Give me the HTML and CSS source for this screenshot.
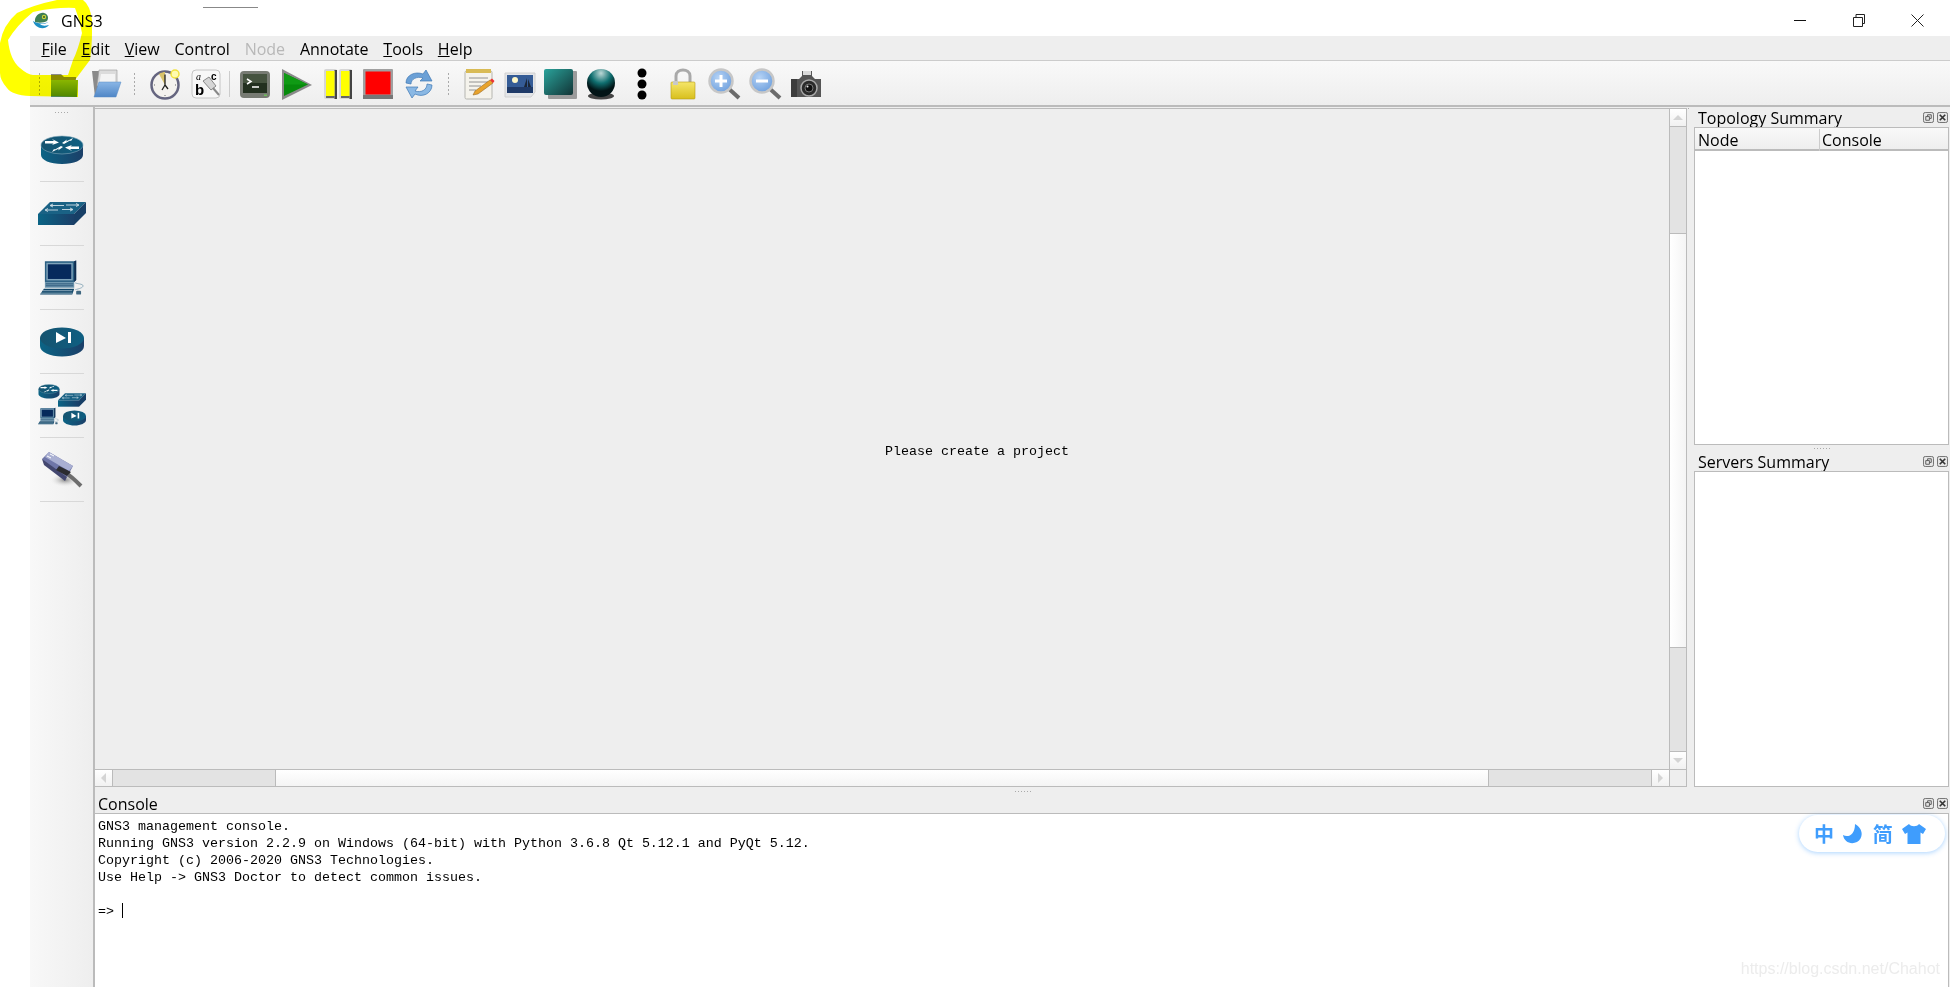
FILE: index.html
```html
<!DOCTYPE html>
<html lang="en-us">

<head>
    <meta charset="utf-8">
    <title>GNS3</title>
    <link rel="stylesheet" href="styles.css">
</head>

<body>
    <svg class="defs" width="0" height="0">
        <defs>
            <linearGradient id="cisco" x1="0" x2="1" y1="0" y2="0">
                <stop offset="0" stop-color="#0b6485" />
                <stop offset="1" stop-color="#1b3f68" />
            </linearGradient>
            <linearGradient id="ciscoTop" x1="0" x2="1" y1="0" y2="0">
                <stop offset="0" stop-color="#15536f" />
                <stop offset="1" stop-color="#0f5f82" />
            </linearGradient>
            <linearGradient id="teal" x1="0" x2="1" y1="0" y2="1">
                <stop offset="0" stop-color="#2aa39b" />
                <stop offset="1" stop-color="#123436" />
            </linearGradient>
            <linearGradient id="folderBlue" x1="0" x2="0" y1="0" y2="1">
                <stop offset="0" stop-color="#8ab6e6" />
                <stop offset="1" stop-color="#4f86c6" />
            </linearGradient>
            <linearGradient id="lockGold" x1="0" x2="0" y1="0" y2="1">
                <stop offset="0" stop-color="#f5e66a" />
                <stop offset="1" stop-color="#d8bf1c" />
            </linearGradient>
            <radialGradient id="sphere" cx="0.5" cy="0.15" r="0.8">
                <stop offset="0" stop-color="#bcd8d6" />
                <stop offset="0.45" stop-color="#0f6f70" />
                <stop offset="0.8" stop-color="#021416" />
            </radialGradient>
            <radialGradient id="lens" cx="0.4" cy="0.35" r="0.7">
                <stop offset="0" stop-color="#b6d3f5" />
                <stop offset="1" stop-color="#6d9fdd" />
            </radialGradient>
            <radialGradient id="cableShadow">
                <stop offset="0" stop-color="#888" />
                <stop offset="1" stop-color="#eee" stop-opacity="0" />
            </radialGradient>

            <symbol id="router" viewBox="0 0 44 30">
                <path d="M1,10 v10 c0,5 9,9 21,9 s21,-4 21,-9 v-10 z" fill="url(#cisco)" />
                <ellipse cx="22" cy="10" rx="21" ry="9" fill="url(#ciscoTop)" stroke="#7fa6b8" stroke-width="0.6" />
                <path d="M5,6 H14 L12,4 L19,7.500 L12,10 L13.500,8.500 H5 z M39,14 H30 L32,16 L25,12.500 L32,10 L30.500,11.500 H39 z M33,3 L26,6.500 L27,4.500 L22,8 L24,9 L30,5.500 L31,6 z M12,17 L19,13.500 L18,15.500 L23,12 L21,11 L15,14.500 L14,14 z" fill="#fff" />
            </symbol>
            <symbol id="switch" viewBox="0 0 48 23">
                <path d="M0,12 H36 V23 H0 z" fill="url(#cisco)" />
                <path d="M0,12 L12,0 H48 L36,12 z" fill="#1a6285" />
                <path d="M36,12 L48,0 V11 L36,23 z" fill="#173f66" />
                <path d="M13,3.500 H26 M28,3 H40 M8,8 H20 M24,7.500 H34" stroke="#e8f0f4" stroke-width="0.8" />
                <path d="M15,2 L12,3.500 L15,5 M38,1.500 L41,3 L38,4.500 M10,6.500 L7,8 L10,9.500 M32,6 L35,7.500 L32,9" fill="none" stroke="#e8f0f4" stroke-width="0.8" />
            </symbol>
            <symbol id="pc" viewBox="0 0 45 37">
                <path d="M5,2 H35 L37,1 V21 L35,23 H5 z" fill="#2a5f82" />
                <path d="M35,2 L37,1 V21 L35,23 z" fill="#0f2c50" />
                <rect x="6.500" y="3.500" width="27" height="18" fill="#7fa3ba" />
                <rect x="8" y="5" width="24" height="15" fill="#062a5c" />
                <path d="M5,23 H35 V29 H5 z" fill="#6f98b0" />
                <path d="M6,25 H34 M6,27 H34" stroke="#1f4a70" stroke-width="0.8" />
                <path d="M4,30 H35 L33,36 H0 z" fill="#0f4568" />
                <path d="M3,32 H33 M1,34.500 H33" stroke="#c3d6e0" stroke-width="0.7" />
                <path d="M36,31 C40,30 44,29 44,27 C44,25 38,25 36,24" fill="none" stroke="#7a9cb0" stroke-width="0.8" />
                <rect x="37" y="32" width="5" height="4" rx="1" fill="#3f6780" />
            </symbol>
            <symbol id="hub" viewBox="0 0 44 30">
                <path d="M0,11 v8 c0,6 10,10.500 22,10.500 s22,-4.500 22,-10.500 v-8 z" fill="url(#cisco)" />
                <ellipse cx="22" cy="11" rx="22" ry="10.500" fill="url(#ciscoTop)" />
                <path d="M16,5 L26,11 L16,16 z M28,5 H31 V16 H28 z" fill="#fff" />
            </symbol>
        </defs>
    </svg>

    <svg class="scribble" width="100" height="100" viewBox="0 0 100 100">
        <path d="M57,0 L83,0 Q90,5 92,20 L92,33 Q92,45 90,60 L75,80 L78,80 L78,97 L30,96 Q12,95 7,88 Q0,80 0,73 L0,43 Q3,25 17,13 Q33,5 57,0 L75,8 Q57,7 33,12 Q17,25 8,40 Q10,60 20,68 Q28,75 33,75 L68,75 L73,60 Q78,50 82,33 Q80,20 75,8 z" />
    </svg>
    <div class="stray-line"></div>

    <header class="titlebar">
        <svg class="logo" width="20" height="20" viewBox="0 0 20 20">
            <path d="M3,11 C2,5 8,1 12,2 C16,3 17,7 15,10 C12,12 6,12 3,11 z" fill="#3f7f55" />
            <circle cx="12" cy="6" r="2.200" fill="#c9d83a" />
            <circle cx="12" cy="6" r="0.900" fill="#26472f" />
            <path d="M1,10 C3,17 12,20 17,14 C13,15 10,15 8,13 C13,13 15,12 17,11 C12,13 5,13 1,10 z" fill="#1d8fc4" />
        </svg>
        <span class="app-name">GNS3</span>
        <div class="win-controls">
            <svg class="win-min" width="12" height="12" viewBox="0 0 12 12"><path d="M0,5.500 H12" stroke="#111" /></svg>
            <svg class="win-max" width="12" height="13" viewBox="0 0 12 13"><path d="M0.500,3.500 H9.500 V12.500 H0.500 z M3,3 V0.500 H11.500 V9.500 H10" fill="none" stroke="#222" /></svg>
            <svg class="win-close" width="13" height="13" viewBox="0 0 13 13"><path d="M0.500,0.500 L12.500,12.500 M12.500,0.500 L0.500,12.500" stroke="#222" /></svg>
        </div>
    </header>

    <div class="app">
        <nav class="menubar">
            <span class="menu-item"><u>F</u>ile</span>
            <span class="menu-item"><u>E</u>dit</span>
            <span class="menu-item"><u>V</u>iew</span>
            <span class="menu-item">Control</span>
            <span class="menu-item disabled">Node</span>
            <span class="menu-item">Annotate</span>
            <span class="menu-item"><u>T</u>ools</span>
            <span class="menu-item"><u>H</u>elp</span>
        </nav>

        <div class="toolbar">
            <span class="grip grip-first"></span>
            <span class="tool">
                <svg viewBox="0 0 36 36"><path d="M5,8 H15 L18,11 H30 V31 H5 z" fill="#8b8b8b" /><path d="M5,14 H32 L31,31 H5 z" fill="url(#folderBlue)" /></svg>
            </span>
            <span class="tool">
                <svg viewBox="0 0 36 36"><path d="M5,5 H12 L14,8 H28 V31 H8 z" fill="#8a8a8a" /><path d="M12,4 H30 V20 H10 z" fill="#dcdcdc" stroke="#999" stroke-width="0.600" /><path d="M14,8 H28 V20 H12 z" fill="#f4f4f4" /><path d="M12,16 H34 L29,31 H7 z" fill="url(#folderBlue)" stroke="#5a8cc4" stroke-width="0.500" /></svg>
            </span>
            <span class="grip grip-wide"></span>
            <span class="tool">
                <svg viewBox="0 0 36 36"><circle cx="18" cy="19" r="13.500" fill="#f4f2ee" stroke="#65657f" stroke-width="2.500" /><path d="M18,19 L12,8 C14,6.500 17,6 18,6 z" fill="#d9c36a" /><path d="M18,19 V9 M18,19 L21,23 M18,19 L15,24" stroke="#222" stroke-width="1.300" fill="none" /><circle cx="28" cy="8" r="4" fill="#fffbb0" stroke="#f1e23f" stroke-width="1.500" /><path d="M18,8 V9 M18,29 V30 M7,19 H8 M28,19 H29" stroke="#666" /></svg>
            </span>
            <span class="tool">
                <svg viewBox="0 0 36 36"><rect x="4" y="4" width="28" height="28" rx="4" fill="#f7f7f7" stroke="#c4c4c4" /><text x="8" y="14" class="abc-a">a</text><text x="23" y="14" class="abc-c">c</text><text x="7" y="29" class="abc-b">b</text><path d="M15,15 L21,11 L28,20 L23,24 z" fill="#d5d5d5" stroke="#888" /><path d="M25,22 L31,29" stroke="#888" stroke-width="2" /></svg>
            </span>
            <span class="tool-sep"></span>
            <span class="tool">
                <svg viewBox="0 0 36 36"><rect x="3" y="5" width="30" height="27" rx="4" fill="#777b73" /><rect x="6" y="8" width="24" height="19" fill="#22301f" /><rect x="6" y="8" width="24" height="9" fill="#45533f" /><path d="M10,13 L14,15.500 L10,18 M15,21 H22" fill="none" stroke="#fff" stroke-width="1.500" /><rect x="27" y="28.500" width="3" height="1.500" fill="#6fbf5a" /></svg>
            </span>
            <span class="tool">
                <svg viewBox="0 0 36 36"><path d="M4,3 L34,19 L4,34 z" fill="#8a8a8a" /><path d="M6,7 L30,18.500 L6,30 z" fill="#078a0c" /><path d="M6,7 L30,18.500 H6 z" fill="#0f9a14" /></svg>
            </span>
            <span class="tool">
                <svg viewBox="0 0 36 36"><rect x="5" y="3" width="13" height="30" rx="2" fill="#d6d6d6" /><rect x="15.500" y="4" width="2.500" height="29" fill="#444" /><rect x="20" y="3" width="13" height="30" rx="2" fill="#d6d6d6" /><rect x="30.500" y="4" width="2.500" height="29" fill="#444" /><rect x="7" y="5" width="8.500" height="25" fill="#ffff00" /><rect x="22" y="5" width="8.500" height="25" fill="#ffff00" /><rect x="7" y="30" width="8.500" height="2" fill="#666" /><rect x="22" y="30" width="8.500" height="2" fill="#666" /></svg>
            </span>
            <span class="tool">
                <svg viewBox="0 0 36 36"><rect x="3" y="3" width="30" height="30" rx="1" fill="#a0a0a0" /><rect x="3" y="29" width="30" height="4" fill="#777" /><rect x="5.500" y="5.500" width="25" height="23" fill="#ff0000" /></svg>
            </span>
            <span class="tool">
                <svg viewBox="0 0 36 36"><path d="M5,17 C5,9 14,5 22,8 L25,4 L31,15 H19 L22,12 C16,10 10,13 10,18 z" fill="#6ba0d6" stroke="#3f78b5" stroke-width="0.700" /><path d="M31,19 C31,27 22,32 14,28 L11,32 L5,21 H17 L14,25 C20,27 26,24 26,18 z" fill="#8ab8e4" stroke="#3f78b5" stroke-width="0.700" /></svg>
            </span>
            <span class="grip grip-wide"></span>
            <span class="tool">
                <svg viewBox="0 0 36 36"><rect x="4" y="5" width="27" height="28" rx="1.500" fill="#f5f3ec" stroke="#b5b5b0" /><rect x="5" y="3" width="25" height="4" fill="#d9bb55" /><path d="M8,12 H27 M8,16 H27 M8,20 H20 M8,24 H15" stroke="#888" stroke-width="0.900" /><path d="M12,29 L14,25 L29,14 L32,17 L17,28 z" fill="#e8a32c" stroke="#8a5a14" stroke-width="0.500" /><path d="M29,14 L32,17 L33.500,15 L31,12.500 z" fill="#e33" /></svg>
            </span>
            <span class="tool">
                <svg viewBox="0 0 36 36"><path d="M3,7 H33 V26 L29,31 H3 z" fill="#e3e5e8" stroke="#d0d0d0" /><rect x="5" y="9" width="26" height="18" fill="#355c96" /><rect x="5" y="21" width="26" height="6" fill="#1f3a68" /><circle cx="13" cy="14" r="3" fill="#fff8c8" /><path d="M22,21 L25,12 L25,21 z M26,21 V13 L29,21 z" fill="#1b2738" /></svg>
            </span>
            <span class="tool tool-narrow">
                <svg viewBox="0 0 36 36"><rect x="6" y="5" width="29" height="28" rx="1" fill="#9b9b9b" /><rect x="2" y="3" width="29" height="26" rx="2" fill="url(#teal)" /></svg>
            </span>
            <span class="tool">
                <svg viewBox="0 0 36 36"><ellipse cx="18" cy="30" rx="13" ry="3.500" fill="#444" /><circle cx="18" cy="17" r="14" fill="url(#sphere)" /></svg>
            </span>
            <span class="tool">
                <svg viewBox="0 0 36 36"><circle cx="18" cy="7" r="4.500" /><circle cx="18" cy="18" r="4.500" /><circle cx="18" cy="29" r="4.500" /></svg>
            </span>
            <span class="tool">
                <svg viewBox="0 0 36 36"><path d="M11,18 V10 C11,2 25,2 25,10 V18" fill="none" stroke="#a9a9a9" stroke-width="3" /><rect x="6" y="16" width="24" height="17" rx="1" fill="url(#lockGold)" stroke="#b79c14" stroke-width="0.600" /><rect x="8" y="15" width="5" height="4" fill="#c9c9c9" /></svg>
            </span>
            <span class="tool">
                <svg viewBox="0 0 36 36"><path d="M22,22 L33,32" stroke="#6b6b6b" stroke-width="4" /><circle cx="15" cy="15" r="11.500" fill="url(#lens)" stroke="#c7c7c7" stroke-width="2.500" /><path d="M15,9 V21 M9,15 H21" stroke="#fff" stroke-width="3" /></svg>
            </span>
            <span class="tool">
                <svg viewBox="0 0 36 36"><path d="M22,22 L33,32" stroke="#6b6b6b" stroke-width="4" /><circle cx="15" cy="15" r="11.500" fill="url(#lens)" stroke="#c7c7c7" stroke-width="2.500" /><path d="M9,15 H21" stroke="#fff" stroke-width="3" /></svg>
            </span>
            <span class="tool">
                <svg viewBox="0 0 36 36"><path d="M3,13 H11 L14,10 V5 H24 V10 L27,13 H33 V31 H3 z" fill="#555" /><rect x="15" y="5" width="8" height="4" fill="#d9d9d9" /><rect x="3" y="13" width="6" height="18" fill="#3d3d3d" /><circle cx="21" cy="22" r="8" fill="#2b2b2b" stroke="#aaa" stroke-width="1.500" /><circle cx="21" cy="22" r="4" fill="#111" stroke="#777" /><circle cx="19.500" cy="20.500" r="1" fill="#eee" /></svg>
            </span>
        </div>

        <div class="workspace">
            <aside class="sidebar">
                <div class="sidebar-grip"></div>
                <div class="device"><svg class="ico-router"><use href="#router" /></svg></div>
                <div class="device"><svg class="ico-switch"><use href="#switch" /></svg></div>
                <div class="device"><svg class="ico-pc"><use href="#pc" /></svg></div>
                <div class="device"><svg class="ico-hub"><use href="#hub" /></svg></div>
                <div class="device">
                    <svg class="ico-all" viewBox="0 0 48 44">
                        <use href="#router" x="0" y="0" width="22" height="15" />
                        <use href="#switch" x="20" y="9" width="28" height="14" />
                        <use href="#pc" x="0" y="22" width="21" height="20" />
                        <use href="#hub" x="25" y="26" width="23" height="16" />
                    </svg>
                </div>
                <div class="device">
                    <svg class="ico-cable" viewBox="0 0 42 40">
                        <ellipse cx="24" cy="30" rx="15" ry="7" fill="url(#cableShadow)" />
                        <path d="M26,24 C30,26 34,30 40,36" fill="none" stroke="#6d6d6d" stroke-width="4" />
                        <path d="M1,9 L8,2 L32,16 L26,27 L6,15 z" fill="#6f76a8" />
                        <path d="M8,2 L32,16 L28,21 L4,7 z" fill="#a9afd2" />
                        <path d="M1,9 L3,15 L24,31 L26,27 z" fill="#43476f" />
                        <path d="M18,16 L30,22 L26,26 L15,20 z" fill="#2c2c30" />
                        <path d="M6,6 L10,8 M9,4 L13,6" stroke="#fff" stroke-width="1" />
                    </svg>
                </div>
            </aside>

            <div class="main">
                <div class="upper">
                    <section class="graphics-view">
                        <div class="canvas">Please create a project</div>
                        <div class="vscroll">
                            <span class="scroll-btn"><i class="arrow-up"></i></span>
                            <span class="groove groove-top"></span>
                            <span class="thumb"></span>
                            <span class="groove groove-bottom"></span>
                            <span class="scroll-btn"><i class="arrow-down"></i></span>
                        </div>
                        <div class="hscroll">
                            <span class="scroll-btn"><i class="arrow-left"></i></span>
                            <span class="groove groove-side"></span>
                            <span class="thumb"></span>
                            <span class="groove groove-side"></span>
                            <span class="scroll-btn"><i class="arrow-right"></i></span>
                        </div>
                        <div class="corner"></div>
                    </section>

                    <div class="v-splitter"></div>

                    <div class="right-docks">
                        <div class="dock-title">
                            <span>Topology Summary</span>
                            <span class="dock-btns">
                                <svg viewBox="0 0 12 12"><rect x="0.500" y="0.500" width="11" height="11" rx="2" fill="#e6e6e6" stroke="#666" /><path d="M3,5 H7 V9 H3 z M5,5 V3 H9 V7 H7" fill="none" stroke="#555" /></svg>
                                <svg viewBox="0 0 12 12"><rect x="0.500" y="0.500" width="11" height="11" rx="2" fill="#e6e6e6" stroke="#666" /><path d="M3,3 L9,9 M9,3 L3,9" stroke="#333" stroke-width="1.800" /></svg>
                            </span>
                        </div>
                        <div class="dock-frame topology">
                            <div class="table-head">
                                <span class="col-node">Node</span>
                                <span class="col-console">Console</span>
                            </div>
                        </div>
                        <div class="h-splitter"><span class="dots"></span></div>
                        <div class="dock-title">
                            <span>Servers Summary</span>
                            <span class="dock-btns">
                                <svg viewBox="0 0 12 12"><rect x="0.500" y="0.500" width="11" height="11" rx="2" fill="#e6e6e6" stroke="#666" /><path d="M3,5 H7 V9 H3 z M5,5 V3 H9 V7 H7" fill="none" stroke="#555" /></svg>
                                <svg viewBox="0 0 12 12"><rect x="0.500" y="0.500" width="11" height="11" rx="2" fill="#e6e6e6" stroke="#666" /><path d="M3,3 L9,9 M9,3 L3,9" stroke="#333" stroke-width="1.800" /></svg>
                            </span>
                        </div>
                        <div class="dock-frame servers"></div>
                    </div>
                </div>

                <div class="h-splitter console-splitter"><span class="dots"></span></div>

                <div class="dock-title console-title">
                    <span>Console</span>
                    <span class="dock-btns">
                        <svg viewBox="0 0 12 12"><rect x="0.500" y="0.500" width="11" height="11" rx="2" fill="#e6e6e6" stroke="#666" /><path d="M3,5 H7 V9 H3 z M5,5 V3 H9 V7 H7" fill="none" stroke="#555" /></svg>
                        <svg viewBox="0 0 12 12"><rect x="0.500" y="0.500" width="11" height="11" rx="2" fill="#e6e6e6" stroke="#666" /><path d="M3,3 L9,9 M9,3 L3,9" stroke="#333" stroke-width="1.800" /></svg>
                    </span>
                </div>

                <section class="console">
                    <div class="console-line">GNS3 management console.</div>
                    <div class="console-line">Running GNS3 version 2.2.9 on Windows (64-bit) with Python 3.6.8 Qt 5.12.1 and PyQt 5.12.</div>
                    <div class="console-line">Copyright (c) 2006-2020 GNS3 Technologies.</div>
                    <div class="console-line">Use Help -&gt; GNS3 Doctor to detect common issues.</div>
                    <div class="console-line">&nbsp;</div>
                    <div class="console-line">=&gt; <span class="caret"></span></div>

                    <div class="ime-pill">
                        <span>中</span>
                        <svg width="20" height="20" viewBox="0 0 20 20"><path d="M12,0 C20,4 21,14 14,18 C8,21 1,18 0,11 C5,14 12,11 12,0 z" fill="#3f9dfd" /></svg>
                        <span>简</span>
                        <svg width="24" height="20" viewBox="0 0 24 20"><path d="M7,0 C9,3 15,3 17,0 L24,5 L21,10 L18.500,8.500 V20 H5.500 V8.500 L3,10 L0,5 z" fill="#3f9dfd" /></svg>
                    </div>
                    <div class="watermark">https://blog.csdn.net/Chahot</div>
                </section>
            </div>
        </div>
    </div>
</body>

</html>
```

FILE: styles.css
```css
* {
    margin: 0;
    padding: 0;
    box-sizing: border-box;
}

body {
    width: 1950px;
    height: 987px;
    overflow: hidden;
    position: relative;
    background-color: #fff;
    color: #000;
    font-family: "Open Sans", "Liberation Sans", sans-serif;
    font-size: 16px;
}

.defs {
    position: absolute;
}

/* highlighter scribble drawn over the screenshot */
.scribble {
    position: absolute;
    top: 0;
    left: 0;
    z-index: 5;
    fill: #ffff00;
    mix-blend-mode: multiply;
}

.stray-line {
    position: absolute;
    top: 7px;
    left: 203px;
    width: 55px;
    height: 1px;
    background-color: #888;
}

.titlebar {
    height: 36px;
    display: flex;
    align-items: center;
    padding: 5px 26px 0 32px;
}

.logo {
    margin-right: 9px;
}

.win-controls {
    margin-left: auto;
    display: flex;
    align-items: center;
}

.win-min {
    margin-right: 47px;
}

.win-max {
    margin-right: 46px;
}

.app {
    margin-left: 30px;
    height: 951px;
    display: flex;
    flex-direction: column;
    background-color: #eee;
}

.menubar {
    height: 25px;
    display: flex;
    align-items: center;
    padding: 1px 0 0 4px;
    border-bottom: 1px solid #ccc;
}

.menu-item {
    padding: 0 7.4px;
}

.menu-item.disabled {
    color: #b8b8b8;
}

.toolbar {
    height: 46px;
    display: flex;
    align-items: center;
    padding: 1px 0 0 5px;
    background: linear-gradient(#f9f9f9, #eee);
    border-bottom: 2px solid #bbb;
}

.tool {
    width: 41px;
    height: 36px;
    display: flex;
    justify-content: center;
}

.tool-narrow {
    width: 40px;
    padding-right: 1px;
}

.tool svg {
    width: 36px;
    height: 36px;
}

.grip {
    width: 18px;
    height: 24px;
    background-image: radial-gradient(circle, #aaa 0.7px, transparent 0.8px);
    background-size: 3px 4px;
    background-position: 8px 0;
    background-repeat: repeat-y;
}

.grip-wide {
    width: 19px;
}

.grip-first {
    width: 8px;
    background-position: 3px 0;
}

.tool-sep {
    width: 8px;
    height: 26px;
    background: linear-gradient(#ccc, #ccc) no-repeat 3px 0 / 1px 100%;
}

.workspace {
    flex: 1;
    min-height: 0;
    display: flex;
}

.sidebar {
    width: 65px;
    background: linear-gradient(to right, #f8f8f8, #eee);
    border-right: 2px solid #bbb;
}

.sidebar-grip {
    height: 11px;
    margin: 0 23px 0 24px;
    background-image: radial-gradient(circle, #aaa 0.7px, transparent 0.8px);
    background-size: 3px 3px;
    background-position: 0 4px;
    background-repeat: repeat-x;
}

.device {
    height: 64px;
    margin: 0 9px 0 10px;
    display: flex;
    align-items: center;
    justify-content: center;
    border-bottom: 1px solid #d8d8d8;
}

.ico-router {
    width: 44px;
    height: 30px;
}

.ico-switch {
    width: 48px;
    height: 23px;
    flex: none;
}

.ico-pc {
    width: 45px;
    height: 37px;
}

.ico-hub {
    width: 44px;
    height: 30px;
}

.ico-all {
    width: 48px;
    height: 44px;
    flex: none;
}

.ico-cable {
    width: 42px;
    height: 40px;
}

.abc-a {
    font: italic 10px "Liberation Serif", serif;
}

.abc-c {
    font: bold 10px "Liberation Sans", sans-serif;
}

.abc-b {
    font: bold 15px "Liberation Sans", sans-serif;
}

.main {
    flex: 1;
    min-width: 0;
    display: flex;
    flex-direction: column;
}

.upper {
    height: 680px;
    display: flex;
}

.graphics-view {
    width: 1592px;
    margin-top: 1px;
    display: grid;
    grid-template-columns: 1fr 17px;
    grid-template-rows: 1fr 17px;
    border-top: 1px solid #bbb;
    border-right: 1px solid #bbb;
    border-bottom: 1px solid #bbb;
}

.canvas {
    padding: 334px 0 0 790px;
    font-family: "Liberation Mono", monospace;
    font-size: 13.33px;
    line-height: 17px;
}

.vscroll,
.hscroll {
    display: flex;
}

.vscroll {
    flex-direction: column;
    border-left: 1px solid #bbb;
}

.hscroll {
    border-top: 1px solid #bbb;
}

.corner {
    border-top: 1px solid #bbb;
    border-left: 1px solid #bbb;
}

.scroll-btn {
    flex: none;
    display: flex;
    align-items: center;
    justify-content: center;
    background: linear-gradient(#fff, #f1f1f1);
}

.vscroll .scroll-btn {
    height: 17px;
}

.hscroll .scroll-btn {
    width: 17px;
}

.arrow-up,
.arrow-down,
.arrow-left,
.arrow-right {
    width: 0;
    height: 0;
    border: 5px solid transparent;
}

.arrow-up {
    border-top: 0;
    border-bottom-color: #d4d4d4;
}

.arrow-down {
    border-bottom: 0;
    border-top-color: #d4d4d4;
}

.arrow-left {
    border-left: 0;
    border-right-color: #d4d4d4;
}

.arrow-right {
    border-right: 0;
    border-left-color: #d4d4d4;
}

.groove {
    flex: none;
    background-color: #e3e3e3;
    border: 0 solid #bbb;
}

.vscroll .groove {
    border-width: 1px 0;
}

.hscroll .groove {
    border-width: 0 1px;
}

.groove-top {
    height: 108px;
}

.groove-bottom {
    height: 105px;
}

.groove-side {
    width: 164px;
}

.thumb {
    flex: 1;
}

.vscroll .thumb {
    background: linear-gradient(to right, #fff, #f4f4f4);
}

.hscroll .thumb {
    background: linear-gradient(#fff, #f4f4f4);
}

.v-splitter {
    width: 7px;
    background-image: radial-gradient(circle, #aaa 0.6px, transparent 0.7px);
    background-size: 3px 3px;
    background-repeat: no-repeat;
}

.right-docks {
    flex: 1;
    min-width: 0;
    display: flex;
    flex-direction: column;
    padding-right: 1px;
}

.dock-title {
    height: 20px;
    flex: none;
    display: flex;
    align-items: center;
    padding: 1px 1px 0 4px;
}

.dock-btns {
    margin-left: auto;
    margin-top: -1px;
    display: flex;
    gap: 3px;
}

.dock-btns svg {
    width: 11px;
    height: 11px;
}

.dock-frame {
    background-color: #fff;
    border: 1px solid #bbb;
}

.topology {
    height: 318px;
}

.servers {
    flex: 1;
}

.table-head {
    height: 23px;
    display: flex;
    align-items: center;
    padding-top: 2px;
    background: linear-gradient(#f9f9f9, #eee);
    border-bottom: 2px solid #bbb;
}

.col-node {
    width: 125px;
    padding-left: 3px;
    border-right: 1px solid #ccc;
}

.col-console {
    padding-left: 2px;
}

.h-splitter {
    height: 6px;
    flex: none;
    display: flex;
    align-items: center;
    justify-content: center;
}

.h-splitter .dots {
    width: 17px;
    height: 1px;
    background-image: radial-gradient(circle, #aaa 0.6px, transparent 0.7px);
    background-size: 3px 1px;
}

.console-splitter {
    height: 8px;
}

.console-title {
    height: 18px;
    padding: 0 2px 1px 3px;
}

.console {
    flex: 1;
    min-height: 0;
    position: relative;
    background-color: #fff;
    margin-right: 1px;
    padding: 4px 0 0 3px;
    border: 1px solid #bbb;
    border-left: 0;
    border-bottom: 0;
    font-family: "Liberation Mono", monospace;
    font-size: 13.33px;
    line-height: 17px;
}

.console-line {
    white-space: pre;
}

.caret {
    display: inline-block;
    width: 1px;
    height: 15px;
    vertical-align: -3px;
    background-color: #000;
}

.ime-pill {
    position: absolute;
    top: 1px;
    right: 3px;
    width: 146px;
    height: 37px;
    display: flex;
    align-items: center;
    justify-content: space-between;
    padding: 0 19px 0 15px;
    background-color: #fff;
    border-radius: 19px;
    box-shadow: 0 1px 5px rgba(64, 158, 255, 0.45);
    color: #3f9dfd;
    font-family: "Noto Sans CJK SC", sans-serif;
    font-size: 20px;
    font-weight: 700;
}

.watermark {
    position: absolute;
    right: 8px;
    bottom: 8px;
    color: #ececec;
    font-family: "Liberation Sans", sans-serif;
    font-size: 16px;
    line-height: 20px;
}
```
